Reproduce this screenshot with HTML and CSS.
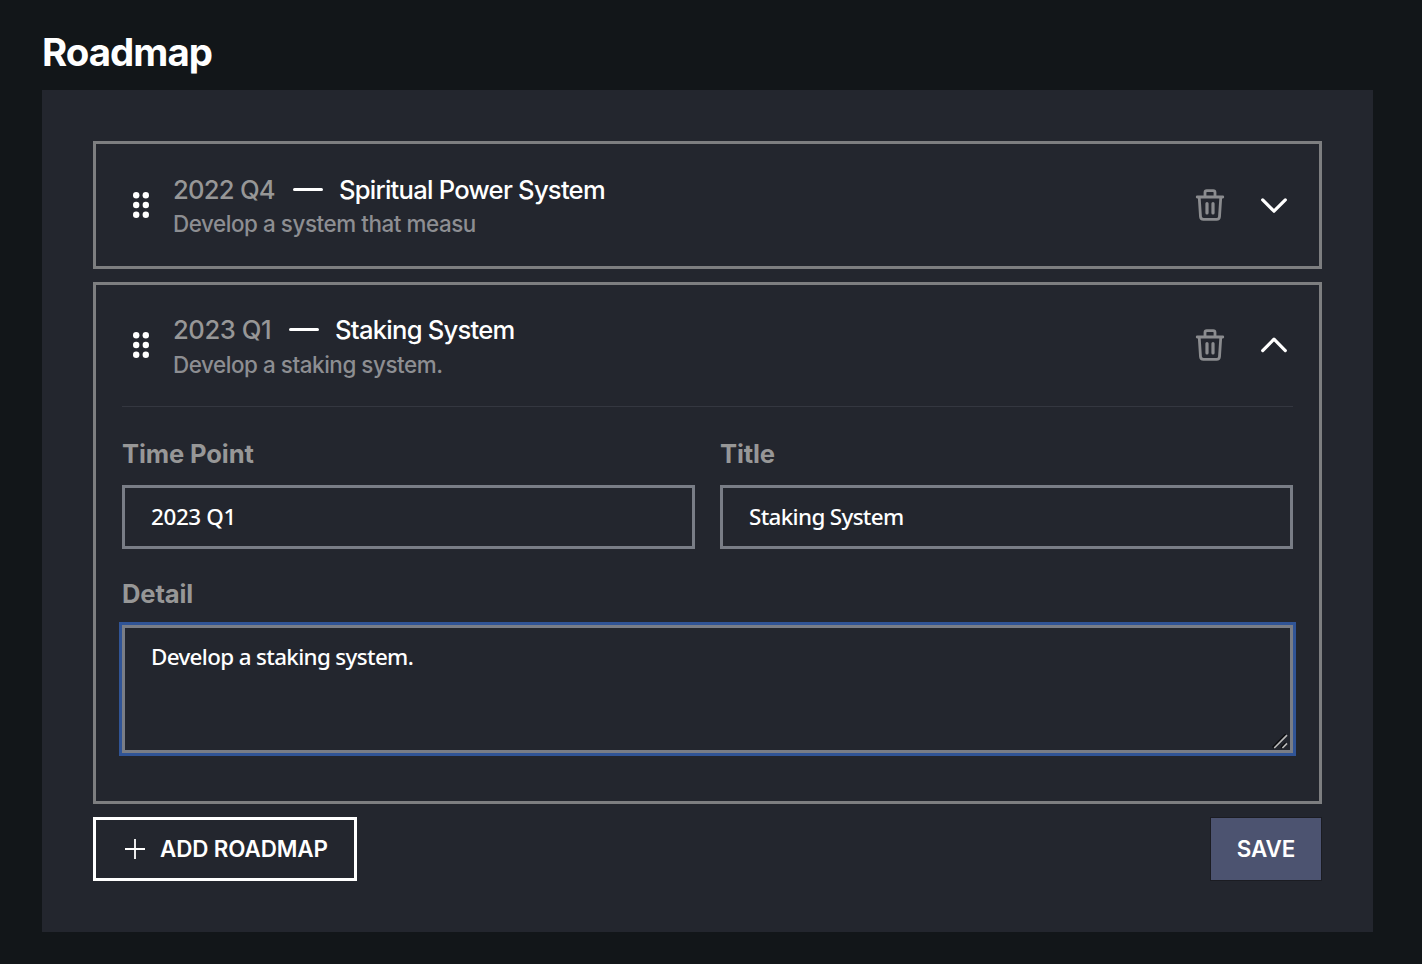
FILE: index.html
```html
<!DOCTYPE html>
<html lang="en">
<head>
<meta charset="utf-8">
<title>Roadmap</title>
<link rel="stylesheet" href="styles.css">
</head>
<body>
<svg class="defs" aria-hidden="true">
  <symbol id="grip" viewBox="0 0 16 26"><g fill="#fff"><circle cx="3.2" cy="3.3" r="3.2"/><circle cx="12.8" cy="3.3" r="3.2"/><circle cx="3.2" cy="13" r="3.2"/><circle cx="12.8" cy="13" r="3.2"/><circle cx="3.2" cy="22.7" r="3.2"/><circle cx="12.8" cy="22.7" r="3.2"/></g></symbol>
  <symbol id="trash" viewBox="0 0 30 34"><g fill="none" stroke="#8b8c8f" stroke-width="2.8" stroke-linecap="round" stroke-linejoin="round"><path d="M2.200 9H27.800M10 9V4.500Q10 2.700 11.800 2.700H18.200Q20 2.700 20 4.500V9M4.200 9L5.500 28.600Q5.700 31.400 8.500 31.400H21.500Q24.300 31.400 24.500 28.600L25.800 9"/><path stroke-width="3.200" d="M12 15.500V25M18 15.500V25"/></g></symbol>
  <symbol id="down" viewBox="0 0 26 16"><path d="M1.700 2.900L13 14.200L24.300 2.900" fill="none" stroke="#fff" stroke-width="3.200" stroke-linecap="round" stroke-linejoin="round"/></symbol>
  <symbol id="up" viewBox="0 0 26 16"><path d="M1.700 13.600L13 2.200L24.300 13.600" fill="none" stroke="#fff" stroke-width="3.200" stroke-linecap="round" stroke-linejoin="round"/></symbol>
</svg>
<main class="page">
  <h1 class="heading"><span>Roadmap</span></h1>
  <section class="panel">
    <article class="card">
      <header class="card-head">
        <svg class="grip"><use href="#grip"/></svg>
        <div class="summary">
          <div class="line"><span class="time q4">2022 Q4</span><i class="dash"></i><span class="name spiritual">Spiritual Power System</span></div>
          <div class="sub"><span class="sub-a">Develop a system that measu</span></div>
        </div>
        <svg class="trash"><use href="#trash"/></svg>
        <svg class="chevron"><use href="#down"/></svg>
      </header>
    </article>
    <article class="card open">
      <header class="card-head">
        <svg class="grip"><use href="#grip"/></svg>
        <div class="summary">
          <div class="line"><span class="time q1">2023 Q1</span><i class="dash"></i><span class="name staking">Staking System</span></div>
          <div class="sub"><span class="sub-b">Develop a staking system.</span></div>
        </div>
        <svg class="trash"><use href="#trash"/></svg>
        <svg class="chevron"><use href="#up"/></svg>
      </header>
      <div class="fields">
        <div class="field"><label class="label" for="time">Time Point</label><input class="input input-time" id="time" value="2023 Q1"></div>
        <div class="field"><label class="label" for="title">Title</label><input class="input" id="title" value="Staking System"></div>
        <div class="field wide"><label class="label" for="detail">Detail</label><div class="area-wrap"><textarea class="input area" id="detail">Develop a staking system.</textarea>
          <svg class="resize" viewBox="0 0 16 16"><path d="M.8 14.800L14 1.600M9.200 14.800L14 10" stroke="#08090c" stroke-width="2.200"/><path d="M2.200 15L15 2.200M10.400 15L15 10.400" stroke="#b9b9b9" stroke-width="1.700"/></svg></div></div>
      </div>
    </article>
    <footer class="actions">
      <button class="btn add"><svg class="plus" viewBox="0 0 20 20"><path d="M0 10H20M10 0V20" stroke="#fff" stroke-width="1.800"/></svg><span>ADD ROADMAP</span></button>
      <button class="btn save"><span>SAVE</span></button>
    </footer>
  </section>
</main>
</body>
</html>
```

FILE: styles.css
```css
* { box-sizing: border-box; }
body { margin: 0; background: #121619; color: #fff; font-family: Inter, "Liberation Sans", sans-serif; height: 964px; overflow: hidden; }
svg { display: block; flex: none; }
.defs { position: absolute; width: 0; height: 0; }
.page { padding: 0 49px 0 42px; }
.heading { margin: 0; height: 90px; padding-top: 28px; font-size: 38.400px; line-height: 48px; font-weight: 700; letter-spacing: -0.950px; }
.panel { height: 842px; padding: 51px; background: #23262e; display: flex; flex-direction: column; }
.card { height: 128px; border: 3px solid #7d7e80; padding: 0 26px; margin-bottom: 13px; }
.card.open { height: 522px; }
.card-head { height: 122px; display: flex; align-items: center; }
.open .card-head { border-bottom: 1px solid #343740; padding-bottom: 1px; }
.grip { width: 16px; height: 26px; margin: 0 24px 0 11px; }
.summary { flex: 1; white-space: nowrap; padding-top: 4px; }
.line { display: flex; align-items: center; height: 35px; font-size: 25.600px; font-weight: 450; }
.time { color: #979797; }
.q4 { letter-spacing: -0.750px; }
.q1 { letter-spacing: -0.450px; }
.name { font-weight: 500; letter-spacing: -0.750px; }
.dash { width: 30px; height: 3px; border-radius: 2px; background: #fff; margin: 0 16px 1px 18px; }
.sub { height: 35px; line-height: 34px; font-size: 22.400px; font-weight: 450; color: #8d8e92; letter-spacing: -0.430px; }
.open .sub { line-height: 35px; }
.trash { width: 30px; height: 34px; margin-right: 36px; }
.chevron { width: 26px; height: 16px; margin-right: 6px; }
.fields { display: grid; grid-template-columns: 1fr 1fr; column-gap: 25px; padding-top: 28px; }
.field { height: 140px; }
.wide { grid-column: 1 / 3; }
.label { display: block; height: 50px; line-height: 37px; font-size: 25.600px; font-weight: 700; color: #979797; letter-spacing: -0.130px; }
.input { display: block; width: 100%; height: 64px; margin: 0; padding: 0 26px 2px; border: 3px solid #797d86; border-radius: 0; background: transparent; color: #fff; font: 500 22.400px "Noto Sans", sans-serif; letter-spacing: -0.650px; outline: none; }
.input-time { letter-spacing: -0.350px; }
.area-wrap { position: relative; }
.area { height: 128px; padding-top: 13px; line-height: 32px; resize: none; overflow: hidden; box-shadow: 0 0 0 3px #305496; }
.resize { position: absolute; right: 5px; bottom: 4px; width: 16px; height: 16px; }
.actions { display: flex; justify-content: space-between; }
.btn { height: 64px; margin: 0; padding: 0; color: #fff; background: transparent; font: 600 22.400px Inter, sans-serif; letter-spacing: -0.120px; display: flex; align-items: center; border-radius: 0; white-space: nowrap; }
.btn span { padding-bottom: 1px; }
.add { width: 264px; border: 3px solid #fff; padding-left: 29px; }
.plus { width: 20px; height: 20px; margin-right: 15px; }
.save { width: 112px; border: 1px solid #1b1c22; background: #4c5370; justify-content: center; }
```
